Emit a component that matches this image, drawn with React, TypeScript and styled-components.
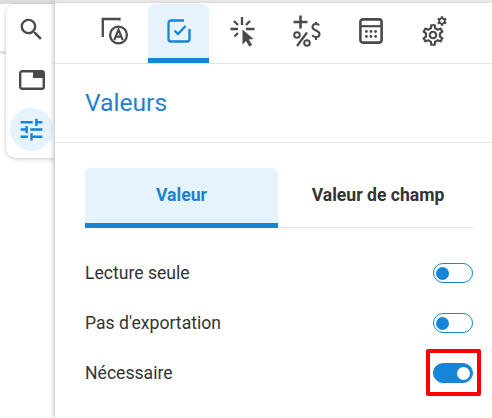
import styled, { createGlobalStyle } from "styled-components";
import { MdOutlineSettings, MdSearch, MdSettings, MdTune } from "react-icons/md";

const BLUE = "#1485d8";
const PALE = "#e6f3fc";
const INK = "#4a4a4a";

const GlobalStyle = createGlobalStyle`
  html, body {
    margin: 0;
    padding: 0;
    background: #fff;
    overflow: hidden;
  }
  * {
    box-sizing: border-box;
  }
`;

function LabelIcon() {
  return (
    <svg width="30" height="30" viewBox="0 0 30 30" fill="none" stroke={INK}>
      <path d="M19.5 4.5V3H2.8V21" strokeWidth="2.3" />
      <circle cx="18.5" cy="19" r="8.4" strokeWidth="2.3" fill="#fff" />
      <path d="M14.3 24L18.5 13.5L22.7 24M15.6 20.6H21.4" strokeWidth="2.1" />
    </svg>
  );
}

function CheckIcon() {
  return (
    <svg width="24" height="24" viewBox="0 0 24 24" fill="none" stroke={BLUE}>
      <path d="M17 1.5H4A2.5 2.5 0 0 0 1.5 4V20A2.5 2.5 0 0 0 4 22.5H20A2.5 2.5 0 0 0 22.5 20V10" strokeWidth="2.3" />
      <path d="M7.5 11.5L11 15L18.5 7" strokeWidth="2.3" />
    </svg>
  );
}

function ClickIcon() {
  return (
    <svg width="32" height="32" viewBox="0 0 32 32" fill="none" stroke={INK}>
      <path d="M15 2V10M3.5 14H11M19 14H27.5M7 6L11 10M23 6L19 10M7.5 21.5L11 18" strokeWidth="2.3" />
      <path d="M15.5 14.5L26.5 24L21.8 24.6L25.2 30L22.2 31.6L19 26L15.5 29.5Z" fill={INK} stroke="none" />
    </svg>
  );
}

function PricingIcon() {
  return (
    <svg width="30" height="32" viewBox="0 0 30 32" fill="none" stroke={INK}>
      <path d="M8.5 0.5V13.5M1.5 7H15.5" strokeWidth="2.6" />
      <circle cx="5" cy="20" r="2.8" strokeWidth="2" />
      <circle cx="15" cy="28" r="2.8" strokeWidth="2" />
      <path d="M15 17.5L5 31" strokeWidth="2.2" />
      <path d="M27 10.5C26.5 8.5 20.5 8 20.5 12C20.5 16 27.5 15 27.5 19.2C27.5 23 21.5 22.8 20.5 20M24 7V9.5M24 22.5V25" strokeWidth="2.1" />
    </svg>
  );
}

function CalculatorIcon() {
  const dots = [5.2, 9.8, 14.4].flatMap((x) => [13.5, 18.5].map((y) => ({ x: x + 2.2, y })));
  return (
    <svg width="24" height="26" viewBox="0 0 24 26" fill="none">
      <rect x="1.4" y="1.4" width="21.2" height="23.2" rx="2.5" stroke={INK} strokeWidth="2.6" />
      <path d="M2 8.2H22" stroke={INK} strokeWidth="2.2" />
      {dots.map((d) => (
        <circle key={`${d.x}-${d.y}`} cx={d.x} cy={d.y} r="1.4" fill={INK} />
      ))}
    </svg>
  );
}

function SettingsIcon() {
  return (
    <svg width="28" height="32" viewBox="0 0 28 32">
      <MdOutlineSettings x={-1} y={7} size={26} color={INK} />
      <MdSettings x={15} y={0} size={12} color={INK} />
    </svg>
  );
}

function WindowIcon() {
  return (
    <svg width="26" height="20" viewBox="0 0 26 20" fill="none">
      <rect x="1.2" y="1.2" width="23.6" height="17.6" rx="2" stroke={INK} strokeWidth="2.4" />
      <rect x="14" y="1" width="11" height="7" fill={INK} />
    </svg>
  );
}

function Toggle({ on }: { on?: boolean }) {
  return (
    <Track $on={on}>
      <Thumb $on={on} />
    </Track>
  );
}

const icons = [
  <LabelIcon key="label" />,
  <CheckIcon key="check" />,
  <ClickIcon key="click" />,
  <PricingIcon key="pricing" />,
  <CalculatorIcon key="calculator" />,
  <SettingsIcon key="settings" />,
];

export default function App() {
  return (
    <Page>
      <GlobalStyle />
      <Rail>
        <RailButton>
          <MdSearch size={29} color={INK} />
        </RailButton>
        <RailButton>
          <WindowIcon />
        </RailButton>
        <RailButton $active>
          <MdTune size={29} color={BLUE} />
        </RailButton>
      </Rail>
      <Panel>
        <IconTabs>
          {icons.map((icon, i) => (
            <IconTab key={i} $active={i === 1}>
              {icon}
            </IconTab>
          ))}
        </IconTabs>
        <Heading>
          <Title>Valeurs</Title>
        </Heading>
        <Body>
          <ValueTabs>
            <ValueTab $active>Valeur</ValueTab>
            <ValueTab>Valeur de champ</ValueTab>
          </ValueTabs>
          <Row>
            <RowLabel>Lecture seule</RowLabel>
            <Toggle />
          </Row>
          <Row>
            <RowLabel>Pas d'exportation</RowLabel>
            <Toggle />
          </Row>
          <Row>
            <RowLabel>Nécessaire</RowLabel>
            <Highlighted>
              <Toggle on />
              <RedBox />
            </Highlighted>
          </Row>
        </Body>
      </Panel>
    </Page>
  );
}

const Page = styled.div`
  width: 492px;
  height: 418px;
  display: flex;
  align-items: flex-start;
  overflow: hidden;
  font-family: Roboto, "Liberation Sans", sans-serif;
  background:
    linear-gradient(#dcdcdc, #dcdcdc) 0 0 / 55px 4px no-repeat,
    linear-gradient(#efefef, #efefef) 55px 0 / 437px 3px no-repeat,
    linear-gradient(#e2e2e2, #e2e2e2) 0 51px / 6px 3px no-repeat,
    #fff;
`;

const Rail = styled.nav`
  width: 49px;
  height: 154px;
  margin: 4px 0 0 6px;
  padding: 4px 2px 0 4px;
  display: flex;
  flex-direction: column;
  align-items: center;
  gap: 7px;
  flex-shrink: 0;
  background: #fff;
  border-radius: 10px 0 0 10px;
  box-shadow: 0 1px 4px rgba(0, 0, 0, 0.22);
`;

const RailButton = styled.div<{ $active?: boolean }>`
  width: 43px;
  height: 43px;
  flex-shrink: 0;
  display: flex;
  align-items: center;
  justify-content: center;
  border-radius: 50%;
  background: ${(p) => (p.$active ? PALE : "transparent")};
`;

const Panel = styled.main`
  flex: 1;
  height: 415px;
  margin-top: 3px;
  background: #fff;
  box-shadow: -2px 0 4px rgba(0, 0, 0, 0.2);
  position: relative;
`;

const IconTabs = styled.div`
  height: 61px;
  padding: 1px 0 0 29px;
  display: flex;
  gap: 3px;
  border-bottom: 1px solid #e4e4e4;
`;

const IconTab = styled.div<{ $active?: boolean }>`
  width: 61px;
  height: 59px;
  display: flex;
  align-items: center;
  justify-content: center;
  border-radius: 6px 6px 0 0;
  background: ${(p) => (p.$active ? PALE : "transparent")};
  border-bottom: 5px solid ${(p) => (p.$active ? BLUE : "transparent")};
`;

const Heading = styled.header`
  height: 79px;
  padding: 0 30px;
  display: flex;
  align-items: center;
  border-bottom: 1px solid #e4e4e4;
`;

const Title = styled.h2`
  margin: 0 0 1px;
  font-size: 24.6px;
  font-weight: 400;
  color: #1f80d0;
`;

const Body = styled.section`
  padding: 25px 19px 0 30px;
`;

const ValueTabs = styled.div`
  display: flex;
  border-bottom: 1px solid #e4e4e4;
  margin-bottom: 20px;
`;

const ValueTab = styled.div<{ $active?: boolean }>`
  width: ${(p) => (p.$active ? "193px" : "195px")};
  height: 60px;
  padding: 0 0 2px ${(p) => (p.$active ? "0" : "5px")};
  display: flex;
  align-items: center;
  justify-content: center;
  font-size: 17.6px;
  font-weight: 700;
  border-radius: 6px 6px 0 0;
  color: ${(p) => (p.$active ? "#1f80d0" : "#333")};
  background: ${(p) => (p.$active ? PALE : "transparent")};
  border-bottom: 5px solid ${(p) => (p.$active ? BLUE : "transparent")};
  margin-bottom: -1px;
`;

const Row = styled.div`
  height: 50px;
  display: flex;
  align-items: center;
  justify-content: space-between;
`;

const RowLabel = styled.span`
  font-size: 17.6px;
  color: #333;
`;

const Track = styled.div<{ $on?: boolean }>`
  width: 40px;
  height: 20px;
  padding: 0 2px;
  display: flex;
  align-items: center;
  justify-content: ${(p) => (p.$on ? "flex-end" : "flex-start")};
  border-radius: 10px;
  border: 1.5px solid ${BLUE};
  background: ${(p) => (p.$on ? BLUE : "#fff")};
`;

const Thumb = styled.div<{ $on?: boolean }>`
  width: 13px;
  height: 13px;
  border-radius: 50%;
  background: ${(p) => (p.$on ? "#fff" : BLUE)};
`;

const Highlighted = styled.div`
  position: relative;
`;

const RedBox = styled.div`
  position: absolute;
  left: -7px;
  top: -14px;
  width: 55px;
  height: 47px;
  border: 4px solid #f00;
  border-radius: 2px;
`;
